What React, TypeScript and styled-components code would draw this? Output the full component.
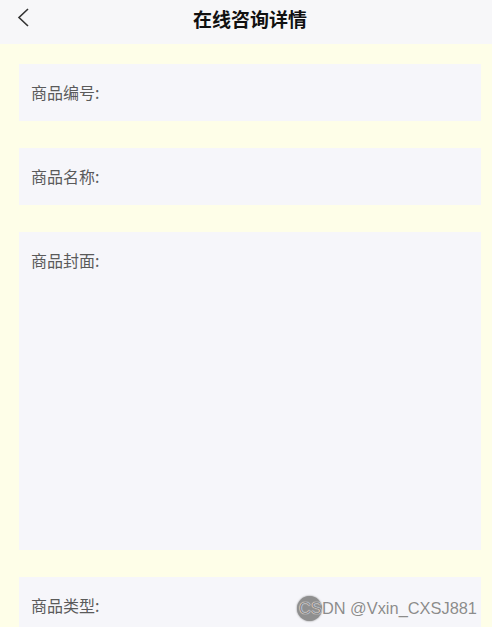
import React from "react";
import styled, { createGlobalStyle } from "styled-components";

const Global = createGlobalStyle`
  html, body { margin: 0; padding: 0; }
  body {
    background: #fefee8;
    font-family: "Noto Sans CJK SC", "Noto Sans", sans-serif;
  }
`;

const Page = styled.div`
  position: relative;
  width: 492px;
  height: 627px;
  overflow: hidden;
  background: #fefee8;
  display: flex;
  flex-direction: column;
`;

const Header = styled.header`
  height: 44px;
  flex: none;
  background: #f7f7f9;
  display: flex;
  align-items: center;
  justify-content: center;
  padding-left: 8px;
  box-sizing: border-box;
  position: relative;
`;

const BackButton = styled.button`
  position: absolute;
  left: 12px;
  top: 6px;
  width: 24px;
  height: 24px;
  padding: 0;
  border: none;
  background: transparent;
  display: flex;
  align-items: center;
  justify-content: center;
`;

const Title = styled.h1`
  margin: 0;
  margin-top: -8px;
  font-size: 19px;
  font-weight: 700;
  color: #111;
  letter-spacing: 0;
`;

const Content = styled.main`
  display: flex;
  flex-direction: column;
  gap: 27px;
  padding: 20px 11px 0 19px;
`;

const Field = styled.div<{ $tall?: boolean }>`
  background: #f6f6fa;
  height: ${(p) => (p.$tall ? "318px" : "57px")};
  flex: none;
  padding: 0 12px;
  box-sizing: border-box;
`;

const Label = styled.div`
  height: 57px;
  line-height: 57px;
  font-size: 16px;
  color: #5a5a5a;
`;

const Watermark = styled.div`
  position: absolute;
  right: 15px;
  bottom: 9px;
  display: flex;
  align-items: center;
  font-family: "Liberation Sans", Arial, sans-serif;
  font-size: 16.4px;
  color: #8c8c8c;
`;

const Avatar = styled.span`
  position: absolute;
  left: -2px;
  top: 50%;
  width: 25px;
  height: 25px;
  margin-top: -13px;
  border-radius: 50%;
  background: #8f8f8f;
  box-shadow: 0 0 2px #777;
`;

const WatermarkText = styled.span`
  position: relative;
  text-shadow: 0 0 1px #fff, 0 0 1px #fff;
`;

export default function App() {
  const fields = [
    { label: "商品编号:" },
    { label: "商品名称:" },
    { label: "商品封面:", tall: true },
    { label: "商品类型:" },
  ];
  return (
    <>
      <Global />
      <Page>
        <Header>
          <BackButton aria-label="返回">
            <svg width="24" height="24" viewBox="0 0 24 24">
              <polyline
                points="16,3 7,11.5 16,20"
                fill="none"
                stroke="#333"
                strokeWidth="1.6"
              />
            </svg>
          </BackButton>
          <Title>在线咨询详情</Title>
        </Header>
        <Content>
          {fields.map((f) => (
            <Field key={f.label} $tall={f.tall}>
              <Label>{f.label}</Label>
            </Field>
          ))}
        </Content>
        <Watermark>
          <Avatar />
          <WatermarkText>CSDN @Vxin_CXSJ881</WatermarkText>
        </Watermark>
      </Page>
    </>
  );
}
